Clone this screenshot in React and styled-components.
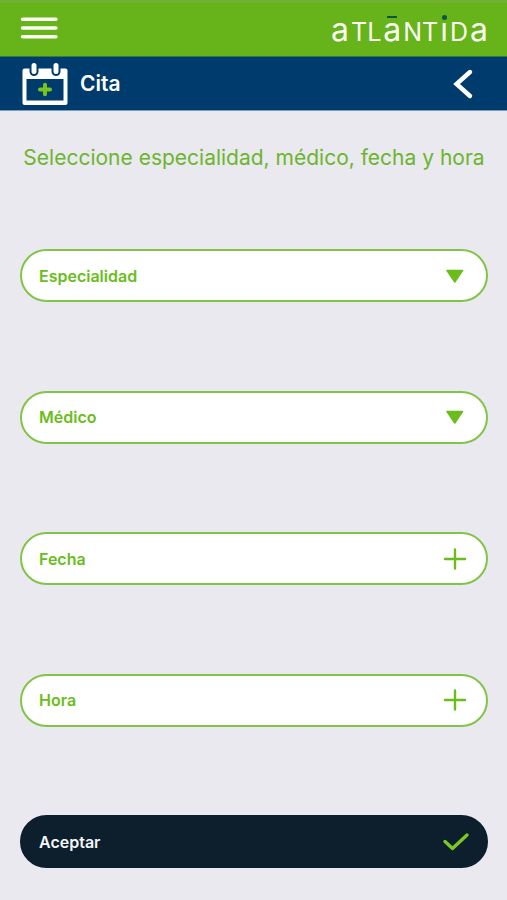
import React from "react";
import styled, { createGlobalStyle } from "styled-components";

const App = () => {
  return (
    <Page>
      <GlobalStyle />
      <TopBar>
        <IconButton type="button" aria-label="Menú">
          <svg width="38" height="24" viewBox="0 0 38 24">
            <path
              d="M2.500 3.300H36M2.500 12H36M2.500 20.700H36"
              stroke="#fbfef4"
              strokeWidth="3.4"
              strokeLinecap="round"
            />
          </svg>
        </IconButton>
        <Logo>
          <Small>a</Small>TL
          <Macron>a</Macron>NT
          <Dotted>ı</Dotted>D<Small>a</Small>
        </Logo>
      </TopBar>
      <TitleBar>
        <CalendarIcon />
        <Title>Cita</Title>
        <IconButton type="button" aria-label="Volver">
          <svg width="24" height="32" viewBox="0 0 24 32">
            <path
              d="M19 4L5.500 16L19 28"
              fill="none"
              stroke="#fff"
              strokeWidth="4.4"
              strokeLinecap="round"
            />
          </svg>
        </IconButton>
      </TitleBar>
      <Content>
        <Heading>Seleccione especialidad, médico, fecha y hora</Heading>
        <Form onSubmit={(e) => e.preventDefault()}>
          <SelectField label="Especialidad" />
          <SelectField label="Médico" />
          <PickerButton type="button">
            Fecha
            <PlusIcon />
          </PickerButton>
          <PickerButton type="button">
            Hora
            <PlusIcon />
          </PickerButton>
          <SubmitButton type="submit">
            Aceptar
            <svg width="30" height="24" viewBox="0 0 30 24">
              <path
                d="M5 11.500L12.500 18.500L27 5"
                fill="none"
                stroke="#7cc822"
                strokeWidth="3.4"
                strokeLinecap="round"
                strokeLinejoin="round"
              />
            </svg>
          </SubmitButton>
        </Form>
      </Content>
    </Page>
  );
};

const SelectField = ({ label }) => (
  <SelectWrapper>
    <Select aria-label={label} defaultValue="">
      <option value="">{label}</option>
    </Select>
    <Arrow width="30" height="24" viewBox="0 0 30 24">
      <path
        d="M7 6.500H22.500L14.800 18Z"
        fill="#6abd1b"
        stroke="#6abd1b"
        strokeWidth="1.5"
        strokeLinejoin="round"
      />
    </Arrow>
  </SelectWrapper>
);

const PlusIcon = () => (
  <svg width="30" height="24" viewBox="0 0 30 24">
    <path
      d="M5 12H25M15 2.500V21.500"
      stroke="#6abd1b"
      strokeWidth="2.4"
      strokeLinecap="round"
    />
  </svg>
);

const CalendarIcon = () => (
  <svg width="46" height="44" viewBox="0 0 46 44">
    <rect x="0.5" y="6.5" width="45" height="36.500" rx="2" fill="#fff" />
    <rect x="4.5" y="17" width="37" height="21.500" fill="#003b6d" />
    <path
      d="M12 4.500V9.500M34 4.500V9.500"
      stroke="#003b6d"
      strokeWidth="9"
      strokeLinecap="round"
    />
    <path
      d="M12 3.500V9.500M34 3.500V9.500"
      stroke="#fff"
      strokeWidth="5"
      strokeLinecap="round"
    />
    <path
      d="M18 27.500H28M23 22.800V32.200"
      stroke="#78c41f"
      strokeWidth="4"
      strokeLinecap="round"
    />
  </svg>
);

export default App;

const GlobalStyle = createGlobalStyle`
  * {
    box-sizing: border-box;
  }
  body {
    margin: 0;
    background-color: #eae9f0;
    font-family: Inter, "Liberation Sans", sans-serif;
  }
`;

const Page = styled.div`
  display: flex;
  flex-direction: column;
  min-height: 100vh;
`;

const TopBar = styled.header`
  display: flex;
  align-items: center;
  justify-content: space-between;
  height: 57px;
  padding: 0 19px 3px 20px;
  border-top: 3px solid #72b030;
  border-bottom: 1px solid #2d7b45;
  background-color: #66b419;
`;

const TitleBar = styled.div`
  display: flex;
  align-items: center;
  height: 54px;
  padding: 0 32px 0 22px;
  border-bottom: 1px solid #7f9cba;
  background-color: #003b6d;
`;

const IconButton = styled.button`
  display: flex;
  padding: 0;
  border: none;
  background: none;
  cursor: pointer;
`;

const Logo = styled.div`
  display: flex;
  align-items: baseline;
  gap: 2px;
  padding-top: 5px;
  color: #fbfef4;
  font-size: 25px;
  line-height: 40px;
`;

const Small = styled.span`
  font-size: 32px;
`;

const Macron = styled(Small)`
  position: relative;
  &::before {
    content: "";
    position: absolute;
    top: 6px;
    left: 4px;
    width: 10px;
    height: 2px;
    background-color: #0b5546;
  }
`;

const Dotted = styled(Small)`
  position: relative;
  &::before {
    content: "";
    position: absolute;
    top: 5px;
    left: 2px;
    width: 5px;
    height: 5px;
    border-radius: 50%;
    background-color: #0b5546;
  }
`;

const Title = styled.h1`
  flex: 1;
  margin: 0 0 0 12px;
  color: #fff;
  font-size: 21px;
  font-weight: 600;
`;

const Content = styled.main`
  display: flex;
  flex: 1;
  flex-direction: column;
  padding: 32px 19px 32px 20px;
`;

const Heading = styled.h2`
  margin: 0 0 76px;
  color: #6cb52d;
  font-size: 21px;
  font-weight: 400;
  line-height: 30px;
  text-align: center;
  white-space: nowrap;
`;

const Form = styled.form`
  display: flex;
  flex: 1;
  flex-direction: column;
  justify-content: space-between;
  gap: 24px;
`;

const SelectWrapper = styled.div`
  display: grid;
  align-items: center;
`;

const Select = styled.select`
  grid-area: 1 / 1;
  width: 100%;
  height: 53px;
  padding: 0 48px 0 17px;
  border: 2px solid #82c447;
  border-radius: 27px;
  background-color: #fff;
  color: #6abd1b;
  font-family: inherit;
  font-size: 16px;
  font-weight: 600;
  appearance: none;
`;

const Arrow = styled.svg`
  grid-area: 1 / 1;
  justify-self: end;
  margin-right: 18px;
  pointer-events: none;
`;

const PickerButton = styled.button`
  display: flex;
  align-items: center;
  justify-content: space-between;
  width: 100%;
  height: 53px;
  padding: 0 16px 0 17px;
  border: 2px solid #82c447;
  border-radius: 27px;
  background-color: #fff;
  color: #6abd1b;
  font-family: inherit;
  font-size: 16px;
  font-weight: 600;
  cursor: pointer;
`;

const SubmitButton = styled(PickerButton)`
  border-color: #0d1e2d;
  background-color: #0d1e2d;
  color: #f3f7fa;
`;
